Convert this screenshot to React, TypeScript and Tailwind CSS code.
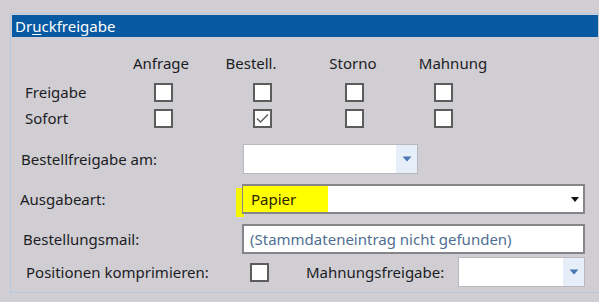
import React from "react";

function CheckBox({ checked = false }: { checked?: boolean }) {
  return (
    <div className="flex h-[19px] w-[19px] shrink-0 items-center justify-center border-2 border-[#5c5c5c] bg-white">
      {checked && (
        <svg width="13" height="11" viewBox="0 0 13 11" fill="none">
          <path d="M1 5.5L4.5 9L12 1.5" stroke="#5a5a5a" strokeWidth="1.4" />
        </svg>
      )}
    </div>
  );
}

function BlueArrow() {
  return (
    <svg width="10" height="6" viewBox="0 0 10 6">
      <path d="M0.5 0.5H9.5L5 5.5Z" fill="#4b78b4" />
    </svg>
  );
}

function DropDown({ className }: { className: string }) {
  return (
    <div className={"flex border border-[#b9b9bd] bg-white " + className}>
      <div className="flex-1" />
      <div className="flex w-[21px] items-center justify-center bg-[#e6eefa]">
        <BlueArrow />
      </div>
    </div>
  );
}

const headers = [
  { text: "Anfrage", w: "w-[80px]" },
  { text: "Bestell.", w: "w-[100px]" },
  { text: "Storno", w: "w-[104px]" },
  { text: "Mahnung", w: "w-[96px]" },
];

export default function App() {
  return (
    <div
      className="h-[302px] w-[599px] overflow-hidden bg-[#d0ced3] pl-[10px] pt-[13px] text-[15px] text-[#1c1c24]"
      style={{ fontFamily: '"Noto Sans", "Open Sans", sans-serif' }}
    >
      <div className="h-[280px] border border-r-0 border-[#b3c9e2] p-px">
        <div className="flex h-[22px] items-center bg-[#0759a1] pl-[3px] text-[15px] text-white">
          <span>
            Dr<span className="underline underline-offset-2">u</span>ckfreigabe
          </span>
        </div>

        <div className="mt-[16px] flex h-[20px] items-center leading-none">
          <div className="w-[109px]" />
          {headers.map((h) => (
            <div key={h.text} className={h.w + " text-center"}>
              {h.text}
            </div>
          ))}
        </div>

        {[
          { label: "Freigabe", checked: [false, false, false, false], mt: "mt-[10px]" },
          { label: "Sofort", checked: [false, true, false, false], mt: "mt-[7px]" },
        ].map((row) => (
          <div key={row.label} className={"flex items-center pl-[13px] " + row.mt}>
            <div className="w-[129px] leading-none">{row.label}</div>
            <CheckBox checked={row.checked[0]} />
            <div className="w-[80px]" />
            <CheckBox checked={row.checked[1]} />
            <div className="w-[73px]" />
            <CheckBox checked={row.checked[2]} />
            <div className="w-[70px]" />
            <CheckBox checked={row.checked[3]} />
          </div>
        ))}

        <div className="mt-[16px] flex h-[30px] items-center pl-[9px]">
          <div className="w-[222px]">Bestellfreigabe am:</div>
          <DropDown className="h-[30px] w-[175px]" />
        </div>

        <div className="mt-[10px] flex h-[30px] items-center pl-[8px]">
          <div className="w-[222px]">Ausgabeart:</div>
          <div className="relative flex h-[30px] w-[343px] items-center">
            <div className="absolute left-[-6px] top-[4px] h-[29px] w-[8px] bg-[#f5f500]" />
            <div className="absolute inset-0 border-2 border-[#85858a] bg-white" />
            <div className="absolute left-[1px] top-[2px] h-[26px] w-[85px] bg-[#ffff00]" />
            <span className="relative pl-[9px] text-[#2a2200]">Papier</span>
            <div className="flex-1" />
            <svg className="relative mr-[6px]" width="8" height="5" viewBox="0 0 8 5">
              <path d="M0 0H8L4 5Z" fill="#111" />
            </svg>
          </div>
        </div>

        <div className="mt-[10px] flex h-[30px] items-center pl-[11px]">
          <div className="w-[219px]">Bestellungsmail:</div>
          <div className="flex h-[30px] w-[343px] items-center border-2 border-[#85858a] bg-white pl-[6px] text-[#4f6f92]">
            (Stammdateneintrag nicht gefunden)
          </div>
        </div>

        <div className="mt-[3px] flex h-[30px] items-center pl-[14px]">
          <div className="w-[224px]">Positionen komprimieren:</div>
          <CheckBox />
          <div className="w-[37px]" />
          <div className="w-[152px]">Mahnungsfreigabe:</div>
          <DropDown className="h-[30px] w-[127px]" />
        </div>
      </div>
    </div>
  );
}
